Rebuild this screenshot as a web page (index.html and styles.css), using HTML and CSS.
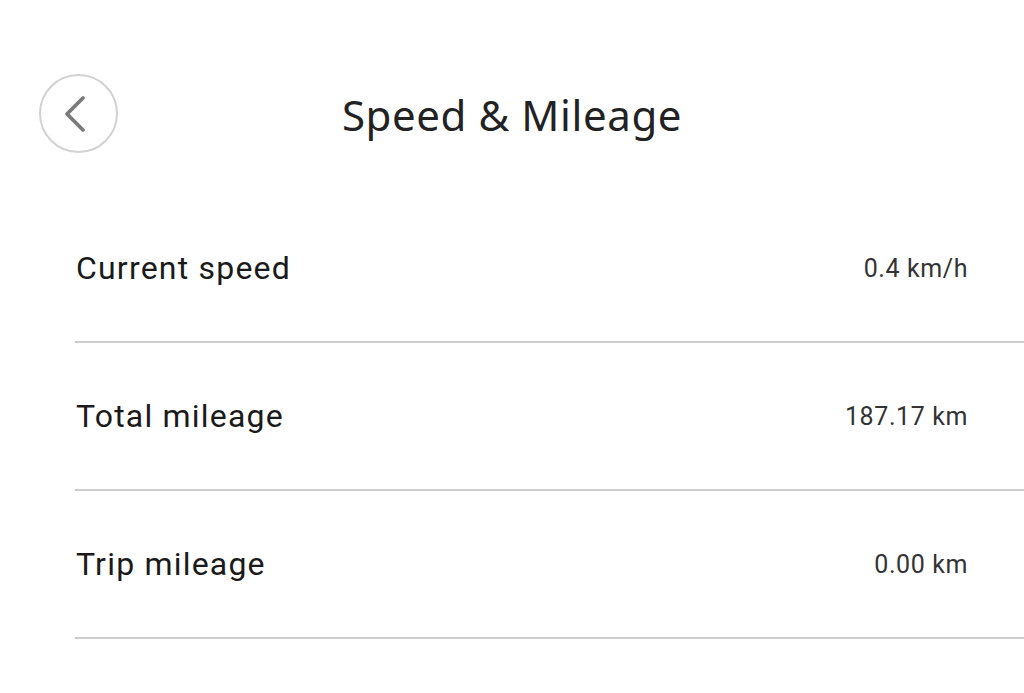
FILE: index.html
```html
<!DOCTYPE html>
<html>
<head>
<meta charset="utf-8">
<link rel="stylesheet" href="styles.css">
</head>
<body>
<div class="page">
  <header class="header">
    <button class="back" aria-label="Back">
      <svg width="28" height="40" viewBox="0 0 28 40"><path d="M20 4 L4 20 L20 36" fill="none" stroke="#7a7a7a" stroke-width="3.8" stroke-linecap="round" stroke-linejoin="round"/></svg>
    </button>
    <h1 class="title">Speed &amp; Mileage</h1>
  </header>
  <ul class="list">
    <li class="row"><span class="label">Current speed</span><span class="value">0.4 km/h</span></li>
    <li class="row"><span class="label">Total mileage</span><span class="value">187.17 km</span></li>
    <li class="row"><span class="label">Trip mileage</span><span class="value">0.00 km</span></li>
  </ul>
</div>
</body>
</html>
```
FILE: styles.css
```css
html, body {
  margin: 0;
  padding: 0;
  background: #fff;
}
.page {
  width: 1024px;
  height: 693px;
  overflow: hidden;
  font-family: Roboto, "Noto Sans", sans-serif;
}
.header {
  position: relative;
  height: 80px;
  margin-top: 74px;
  display: flex;
  align-items: center;
  justify-content: center;
}
.back {
  position: absolute;
  left: 39px;
  top: 0;
  width: 79px;
  height: 79px;
  border-radius: 50%;
  border: 2px solid #d2d2d2;
  background: #fff;
  display: flex;
  align-items: center;
  justify-content: center;
  padding: 0 4px 0 0;
  box-sizing: border-box;
}
.title {
  margin: 0;
  font-family: "Noto Sans", sans-serif;
  font-weight: 400;
  font-size: 42px;
  color: #222;
  letter-spacing: 0.6px;
}
.list {
  list-style: none;
  margin: 41px 0 0 75px;
  padding: 0;
}
.row {
  height: 146px;
  border-bottom: 2px solid #cccccc;
  display: flex;
  align-items: center;
  justify-content: space-between;
  padding: 0 56px 0 1px;
}
.label {
  font-size: 32px;
  color: #1a1a1a;
  letter-spacing: 1.2px;
}
.value {
  font-size: 25px;
  color: #333;
  letter-spacing: 0.6px;
}
```
